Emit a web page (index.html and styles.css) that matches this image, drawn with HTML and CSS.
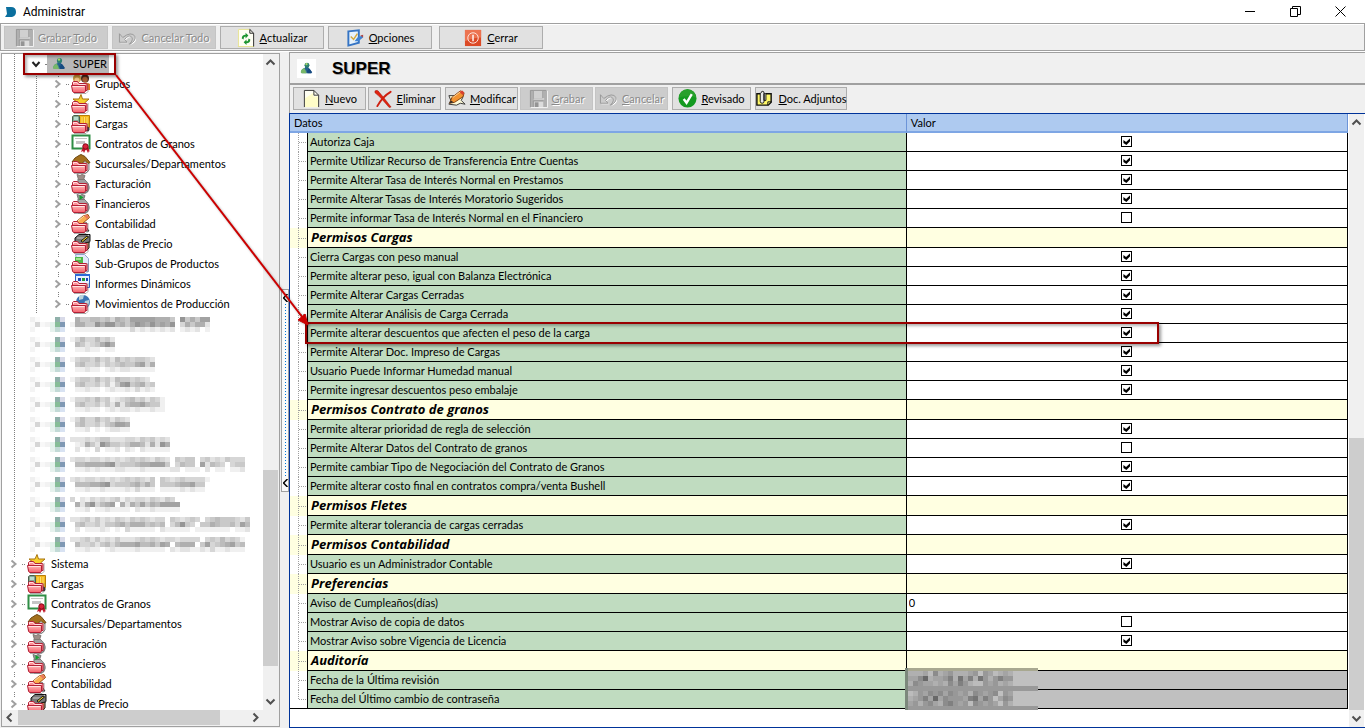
FILE: index.html
```html
<!DOCTYPE html>
<html lang="es">
  <head>
    <meta charset="UTF-8" />
    <meta name="viewport" content="width=device-width, initial-scale=1.0" />
    <title>Administrar</title>
    <link rel="stylesheet" href="styles.css">
  </head>
  <body>
    <svg class="defs" aria-hidden="true">
      <defs>
        <linearGradient id="rojo" x1="0" y1="0" x2="0" y2="1">
          <stop offset="0" stop-color="#ffb8b8" />
          <stop offset="1" stop-color="#f4606c" />
        </linearGradient>
        <linearGradient id="azul" x1="0" y1="0" x2="1" y2="0">
          <stop offset="0" stop-color="#5fae7c" />
          <stop offset="1" stop-color="#2457a0" />
        </linearGradient>
        <g id="carpeta">
          <path d="M3 19.500h12l2-2V9" fill="none" stroke="#777" opacity=".6" />
          <path d="M1.500 17V8.500l1-1h4l1.500 2h7.500l.5 1v6z" fill="#ff9098" stroke="#b32036" />
          <path d="M2.500 10V8.500h3.500l1.500 2h7" fill="none" stroke="#ffdede" />
          <path d="M.5 11.500h14v5.500l-1 1.500h-11l-1-1.500z" fill="url(#rojo)" stroke="#b32036" />
          <path d="M1.500 12.500h12" fill="none" stroke="#ffe2e2" />
        </g>
      </defs>
      <symbol id="i-usuario" viewBox="0 0 20 20">
        <path d="M4 14q0-4 5-5 4 0 6 4v2H5z" fill="url(#azul)" />
        <path d="M4 14q1-4 4-4l2 5H5z" fill="#79b868" />
        <path d="M9 9l4 1 3 4-1 1h-4z" fill="#164a80" />
        <path d="M8.500 7h4l-1 5-3-1z" fill="#24628c" />
        <circle cx="10.500" cy="6.500" r="2.600" fill="#2d8170" />
        <circle cx="10" cy="5.500" r="1.200" fill="#a8d86c" />
      </symbol>
      <symbol id="i-grupos" viewBox="0 0 20 20">
        <circle cx="6" cy="4.500" r="4" fill="#c8973c" />
        <circle cx="6" cy="6" r="2.500" fill="#f0c489" />
        <circle cx="14" cy="4.500" r="4" fill="#4a2b1c" />
        <circle cx="14" cy="5.500" r="2.700" fill="#a85c34" />
        <path d="M11 10q4-3 8 0v6h-5z" fill="#e87820" />
        <use href="#carpeta" />
      </symbol>
      <symbol id="i-sistema" viewBox="0 0 20 20">
        <path d="M10 .5l1.500 4.500h6.500l-4 3.500 1.500 5-5.500-3-5 3 1.500-5-4.500-3.500h6z" fill="#f7cf2c" stroke="#a87510" />
        <use href="#carpeta" />
      </symbol>
      <symbol id="i-cargas" viewBox="0 0 20 20">
        <path d="M7.500 1.500h11v12h-11z" fill="#f5b81c" stroke="#b77c08" />
        <path d="M11 3v10M13.500 3v10M16 3v10" stroke="#fbe070" />
        <path d="M1.500 9V2.500l1.500-1h4l1.500 1V9z" fill="#88a690" stroke="#47604c" />
        <path d="M3 3h4v3H3z" fill="#b8dcd0" />
        <circle cx="16" cy="15" r="2.500" fill="#222" />
        <use href="#carpeta" />
      </symbol>
      <symbol id="i-contratos" viewBox="0 0 20 20">
        <path d="M1.500 1.500h17v13h-17z" fill="#fff" stroke="#2f8d45" stroke-width="2" />
        <path d="M4 4.500h12" stroke="#c5c5c5" />
        <path d="M5 7h9v3H5z" fill="#c5c5c5" />
        <path d="M12 13l-2 5 2-1 1 2 2-4 2 4 1-2 1 1-2-5z" fill="#c0182a" />
        <circle cx="14.500" cy="12.500" r="2.700" fill="#d82238" stroke="#850818" />
      </symbol>
      <symbol id="i-sucursales" viewBox="0 0 20 20">
        <path d="M4 8h14v8l-3 3H6z" fill="#f1f1f1" stroke="#888" />
        <path d="M1 8l3-4L8 1.500l2-1 4 2 5 6-2 1-3-3-3 3z" fill="#a4701c" stroke="#6d4810" />
        <use href="#carpeta" />
      </symbol>
      <symbol id="i-facturacion" viewBox="0 0 20 20">
        <path d="M7 5h6q6 5 5 10-1 4-5 4H7V9z" fill="#a0a0a0" stroke="#777" />
        <path d="M6 .5l3 1 2-1 3 1-1.500 4h-5z" fill="#9d8d87" stroke="#807873" />
        <use href="#carpeta" />
      </symbol>
      <symbol id="i-financieros" viewBox="0 0 20 20">
        <path d="M7 5h6q6 5 5 10-1 4-5 4H7V9z" fill="#a8a8a8" stroke="#777" />
        <path d="M6 .5l3 1 2-1 3 1-1.500 4h-5z" fill="#939c94" stroke="#777" />
        <path d="M8.500 1v5l4-2.500z" fill="#12a030" />
        <use href="#carpeta" />
      </symbol>
      <symbol id="i-contabilidad" viewBox="0 0 20 20">
        <path d="M9 9h7l-1 4 3 4h-6z" fill="#fff" stroke="#222" />
        <path d="M5 8l7-6 5-1.500 1.500 3-7 6-5 1z" fill="#f8ae50" stroke="#9c5010" />
        <path d="M13 1.500l3-1 2 3-2 1.500z" fill="#e8785c" />
        <path d="M7 7l6-5" stroke="#ffe0b0" />
        <use href="#carpeta" />
      </symbol>
      <symbol id="i-tablas" viewBox="0 0 20 20">
        <path d="M4 4l4-3.500h11v7l-4 3.500H4z" fill="#777" stroke="#111" />
        <path d="M6 4h8l4-3" fill="none" stroke="#ccc" />
        <path d="M10 7l6-5 1.500 1-6 5z" fill="#f4d52b" stroke="#111" />
        <path d="M14 9l4-1v6l-3 3z" fill="#d28b4e" stroke="#111" />
        <use href="#carpeta" />
      </symbol>
      <symbol id="i-subgrupos" viewBox="0 0 20 20">
        <path d="M4.500 .5h9l4 4v13h-9z" fill="#e2eafa" stroke="#91a4cc" />
        <path d="M4 3h8v6H4z" fill="#4cb848" />
        <path d="M5 4h5v2H5z" fill="#a2e48c" />
        <use href="#carpeta" />
      </symbol>
      <symbol id="i-informes" viewBox="0 0 20 20">
        <path d="M4.500 .5h14v13h-14z" fill="#e9f0ff" stroke="#2b62c4" />
        <path d="M4 0h15v2H4z" fill="#2b6bd8" />
        <path d="M7 4h3v3H7zM15 4h2v3h-2z" fill="#1c47b8" />
        <path d="M11 4h3v3h-3z" fill="#1f9a3c" />
        <use href="#carpeta" />
      </symbol>
      <symbol id="i-movimientos" viewBox="0 0 20 20">
        <circle cx="12" cy="8" r="7" fill="#3a74b4" />
        <path d="M8 2q3-2 5-1l-1 4-4 1zM14 7l4-1q1 4-2 7l-3-2z" fill="#b9d2dc" />
        <use href="#carpeta" />
      </symbol>
      <symbol id="i-disquete" viewBox="0 0 20 20">
        <path d="M1 1h17l1 1v17H1z" fill="#b0b0b0" />
        <path d="M4 1h11v9H4z" fill="#d0d0d0" />
        <path d="M5 13h10v6H5z" fill="#dcdcdc" />
        <path d="M6 14h4v5H6z" fill="#949494" />
        <path d="M1.500 19V1.500H18M4.500 2v8h10V2M4.500 19v-6.500H15" fill="none" stroke="#989898" />
        <path d="M19.500 2v17.500H2M5 10.500h11" fill="none" stroke="#f2f2f2" />
      </symbol>
      <symbol id="i-deshacer" viewBox="0 0 20 20">
        <path d="M1.500 6v9h8l-2.500-3q4-5 7-3 3 3-2 8 7-3 6-8-4-6-13 1z" fill="#fff" transform="translate(1 1)" />
        <path d="M1.500 6v9h8l-2.500-3q4-5 7-3 3 3-2 8 7-3 6-8-4-6-13 1z" fill="#ccc" stroke="#989898" />
      </symbol>
      <symbol id="i-actualizar" viewBox="0 0 20 20">
        <path d="M1 1h12l5 5v14H1z" fill="#fffff4" />
        <path d="M1.500 19.500V1.500h12M1 19.500h17" fill="none" stroke="#e6e290" />
        <path d="M13.500 1.500v4h4M13.500 1.500l4 4v14" fill="none" stroke="#222" />
        <path d="M5 11q0-4 4-4V5l3 3-3 3V9q-2 0-2 3zM14 12q0 4-4 4v2l-3-3 3-3v2q2 0 2-3z" fill="#1e9630" />
      </symbol>
      <symbol id="i-opciones" viewBox="0 0 20 20">
        <path d="M2.500 3.500l11-1v13l-11 3z" fill="#e6f2fc" stroke="#3574c4" stroke-width="2" />
        <path d="M5 9l3 3 4-6" fill="none" stroke="#d3a83c" stroke-width="1.500" />
        <path d="M9 14l3-4 5-2 1 2-5 4z" fill="#3e82d2" />
        <path d="M15 8l3-1v3z" fill="#b04848" />
      </symbol>
      <symbol id="i-cerrar" viewBox="0 0 20 20">
        <path d="M1 2h17v17H1z" fill="#dc4a26" />
        <path d="M1 2h17v8q-8 0-17 4z" fill="#ec7350" />
        <circle cx="9.500" cy="10.500" r="5.500" fill="none" stroke="#ffe8e0" />
        <path d="M9.500 7v7" stroke="#fff" stroke-width="1.500" />
      </symbol>
      <symbol id="i-nuevo" viewBox="0 0 20 20">
        <path d="M2.500 1.500h10l5 5v13h-15z" fill="#fffff2" />
        <path d="M3 19V10l9-6v4h5v11z" fill="#fffdc8" />
        <path d="M2.500 19V1.500h10l5 5V19M12.500 1.500v5h5" fill="none" stroke="#333" />
      </symbol>
      <symbol id="i-eliminar" viewBox="0 0 20 20">
        <path d="M1 2q3-2 5 2l5 6 7 9-2 .5-7-8Q4 6 1 4z" fill="#e02410" stroke="#a01008" stroke-width=".5" />
        <path d="M17.500 3Q9 8 3.500 18" fill="none" stroke="#cf2010" stroke-width="2" stroke-linecap="round" />
      </symbol>
      <symbol id="i-modificar" viewBox="0 0 20 20">
        <path d="M2 7h9l6 1-2 4 4 4-5-1-4 2-8-1 2-4z" fill="#fffbd8" stroke="#333" />
        <path d="M3 15l2-6 9-7 4 2-1 4-9 6z" fill="#f29332" stroke="#803c0c" />
        <path d="M13 2.500l3-1 2 2-1 3-4-3z" fill="#d84030" />
        <path d="M3 15l1-3 3 2z" fill="#2b2b2b" />
        <path d="M6 9l8-6" stroke="#ffd79c" />
      </symbol>
      <symbol id="i-revisado" viewBox="0 0 20 20">
        <circle cx="10" cy="10" r="9.500" fill="#149a20" />
        <path d="M1 9a9 9 0 0 1 18 0q-9-3-18 0z" fill="#28a02c" />
        <path d="M6 10.500l3 4 5.500-9" fill="none" stroke="#fff" stroke-width="2.500" />
      </symbol>
      <symbol id="i-adjuntos" viewBox="0 0 20 20">
        <path d="M2 5h15v9l-3 3H2z" fill="#fff868" stroke="#111" stroke-width="1.500" />
        <path d="M5.500 4v9q0 2 2 2t2-2V4q0-1.500-1.500-1.500T6.500 4M9.500 5v7h2V5" fill="#e8e8e8" stroke="#111" />
        <path d="M13.500 17v-3.500h4" fill="none" stroke="#111" />
      </symbol>
    </svg>

    <header class="titulo">
      <svg class="logo" viewBox="0 0 11 12" aria-hidden="true">
        <path d="M1 1h5q5 0 5 5 0 4-4 5H0l2-3z" fill="#0a6f9e" />
      </svg>
      <span class="nombre">Administrar</span>
      <button class="ventana" aria-label="Minimizar">
        <svg viewBox="0 0 11 11"><path d="M0 5.500h10" /></svg>
      </button>
      <button class="ventana" aria-label="Restaurar">
        <svg viewBox="0 0 11 11"><path d="M.5 2.500h7v8h-7zM2.500 2.500v-2h8v8h-3" /></svg>
      </button>
      <button class="ventana" aria-label="Cerrar ventana">
        <svg viewBox="0 0 11 11"><path d="M.5 .5l10 10M10.500 .5l-10 10" /></svg>
      </button>
    </header>

    <div class="barra principal">
      <button class="boton" disabled><svg><use href="#i-disquete" /></svg><span>Grabar <u>T</u>odo</span></button>
      <button class="boton" disabled><svg><use href="#i-deshacer" /></svg><span>Cancelar Todo</span></button>
      <button class="boton"><svg><use href="#i-actualizar" /></svg><span><u>A</u>ctualizar</span></button>
      <button class="boton"><svg><use href="#i-opciones" /></svg><span><u>O</u>pciones</span></button>
      <button class="boton aparte"><svg><use href="#i-cerrar" /></svg><span><u>C</u>errar</span></button>
    </div>

    <main>
      <nav class="panel">
        <div class="arbol" id="arbol"></div>
        <div class="scroll vertical izquierda">
          <svg viewBox="0 0 15 17"><path d="M3.500 10.500l4-4 4 4" /></svg>
          <div class="pista"><div class="tirador"></div></div>
          <svg viewBox="0 0 15 17"><path d="M3.500 6.500l4 4 4-4" /></svg>
        </div>
        <div class="scroll horizontal">
          <svg viewBox="0 0 16 15"><path d="M9.500 3.500l-4 4 4 4" /></svg>
          <div class="pista"><div class="tirador"></div></div>
          <svg viewBox="0 0 16 15"><path d="M6.500 3.500l4 4-4 4" /></svg>
        </div>
      </nav>

      <div class="divisor">
        <button class="plegar" aria-label="Plegar panel">
          <svg viewBox="0 0 5 8"><path d="M4.500 0l-4 4 4 4" /></svg>
          <i></i>
          <svg viewBox="0 0 5 8"><path d="M4.500 0l-4 4 4 4" /></svg>
        </button>
      </div>

      <section class="detalle">
        <div class="cabecera">
          <svg class="avatar"><use href="#i-usuario" /></svg>
          <h1>SUPER</h1>
        </div>
        <div class="barra acciones">
          <button class="boton"><svg><use href="#i-nuevo" /></svg><span><u>N</u>uevo</span></button>
          <button class="boton"><svg><use href="#i-eliminar" /></svg><span><u>E</u>liminar</span></button>
          <button class="boton grupo"><svg><use href="#i-modificar" /></svg><span><u>M</u>odificar</span></button>
          <button class="boton" disabled><svg><use href="#i-disquete" /></svg><span><u>G</u>rabar</span></button>
          <button class="boton" disabled><svg><use href="#i-deshacer" /></svg><span><u>C</u>ancelar</span></button>
          <button class="boton grupo medio"><svg><use href="#i-revisado" /></svg><span><u>R</u>evisado</span></button>
          <button class="boton grupo largo"><svg><use href="#i-adjuntos" /></svg><span><u>D</u>oc. Adjuntos</span></button>
        </div>
        <div class="rejilla">
          <div class="tabla">
            <table>
              <colgroup>
                <col class="col-guia">
                <col>
                <col class="col-valor">
              </colgroup>
              <thead>
                <tr><th colspan="2">Datos</th><th>Valor</th></tr>
              </thead>
              <tbody id="datos"></tbody>
            </table>
          </div>
          <div class="scroll vertical derecha">
            <svg viewBox="0 0 15 17"><path d="M3.500 10.500l4-4 4 4" /></svg>
            <div class="pista"><div class="tirador"></div></div>
            <svg viewBox="0 0 15 17"><path d="M3.500 6.500l4 4 4-4" /></svg>
          </div>
        </div>
      </section>
    </main>

    <div class="marca marca-arbol"></div>
    <div class="marca marca-fila"></div>
    <svg class="flecha" viewBox="0 0 200 260" aria-hidden="true">
      <path d="M6 4L193 247" stroke="#c00" stroke-width="2" />
      <path d="M198 254l-10-5 7-6z" fill="#c00" stroke="#c00" />
    </svg>

    <script src="script.js"></script>
  </body>
</html>
```
FILE: styles.css
```css
* {
  box-sizing: border-box;
}
body {
  margin: 0;
  height: 100vh;
  display: flex;
  flex-direction: column;
  overflow: hidden;
  background: #f0f0f0;
  color: #000;
  font: 11px/18px Lato, "Liberation Sans", sans-serif;
}
button,
input {
  font: inherit;
  color: inherit;
}
svg {
  display: block;
  flex: none;
}
.defs {
  position: absolute;
  width: 0;
  height: 0;
}

/* barra de título */
.titulo {
  display: flex;
  align-items: center;
  height: 23px;
  padding: 0 2px 0 5px;
  background: #fff;
}
.logo {
  width: 11px;
  height: 12px;
}
.nombre {
  flex: 1;
  margin-left: 7px;
  font: 12px/18px Roboto, sans-serif;
}
.ventana {
  width: 45px;
  height: 21px;
  padding: 0 17px;
  border: 0;
  background: none;
}
.ventana svg {
  width: 11px;
  height: 11px;
  fill: none;
  stroke: #000;
}

/* botones */
.barra {
  display: flex;
  gap: 4px;
}
.principal {
  height: 28px;
  margin-bottom: 1px;
  padding: 2px 3px;
  border: 1px solid #a0a0a0;
  box-shadow: inset 0 1px #fff, 0 1px #fff;
}
.boton {
  display: flex;
  justify-content: center;
  align-items: center;
  gap: 4px;
  width: 104px;
  height: 23px;
  padding: 0;
  border: 1px solid #adadad;
  background: #e1e1e1;
  white-space: nowrap;
}
.boton svg {
  width: 19px;
  height: 19px;
}
.boton:disabled {
  border-color: #c4c4c4;
  background: #ccc;
  color: #8a8a8a;
  text-shadow: 1px 1px #fff;
}
.aparte {
  margin-left: 3px;
}
.acciones {
  gap: 2px;
  padding: 2px 4px 3px 3px;
}
.acciones .boton {
  width: 73px;
}
.acciones .grupo {
  margin-left: 2px;
}
.acciones .medio {
  width: 79px;
}
.acciones .largo {
  width: 92px;
}

main {
  flex: 1;
  display: flex;
  min-height: 0;
}

/* panel del árbol */
.panel {
  flex: none;
  display: grid;
  grid-template: 1fr 16px / 1fr 16px;
  width: 279px;
  margin: 1px 0 1px 1px;
  border: 1px solid #a0a0a0;
  background: #f0f0f0;
}
.arbol {
  padding-left: 1px;
  overflow: hidden;
  background: #fff;
}
.nodo {
  display: flex;
  height: 20px;
  line-height: 20px;
  white-space: nowrap;
}
.guia,
.rama {
  flex: none;
  width: 22px;
  background: repeating-linear-gradient(#808080 0 1px, transparent 1px 2px) 11px 0 / 1px 100% no-repeat;
}
.rama {
  display: flex;
  align-items: center;
  padding-left: 7px;
}
.rama svg {
  width: 8px;
  height: 14px;
  background: #fff;
  fill: none;
  stroke: #a0a0a0;
  stroke-width: 2;
}
.rama::after {
  content: "";
  width: 5px;
  margin-left: 4px;
  border-top: 1px dotted #808080;
}
.rama.fin {
  background-size: 1px 50%;
}
.rama.abierta {
  padding-left: 6px;
  background: none;
}
.rama.abierta svg {
  width: 10px;
  stroke: #222;
}
.nodo a {
  display: flex;
  gap: 4px;
  padding: 0 2px;
  color: #000;
  text-decoration: none;
}
.nodo a svg {
  width: 20px;
  height: 20px;
}
.nodo.activo a {
  background: #b8b8b8;
}
.oculto {
  width: 235px;
  height: 15px;
  margin-top: 3px;
}

/* barras de desplazamiento */
.scroll {
  display: flex;
  background: #f0f0f0;
}
.scroll svg {
  fill: none;
  stroke: #505050;
  stroke-width: 2;
}
.vertical {
  flex-direction: column;
}
.vertical svg {
  width: 15px;
  height: 17px;
}
.horizontal svg {
  width: 16px;
  height: 15px;
}
.pista {
  flex: 1;
}
.tirador {
  background: #cdcdcd;
}
.vertical .pista {
  display: flex;
  flex-direction: column;
  justify-content: flex-end;
}
.vertical .tirador {
  width: 15px;
}
.izquierda .pista {
  padding-bottom: 27px;
}
.izquierda .tirador {
  height: 33%;
}
.derecha {
  margin: 0 1px;
}
.derecha .tirador {
  height: 47%;
}
.horizontal .tirador {
  width: 88%;
  height: 15px;
}

/* divisor */
.divisor {
  flex: none;
  display: flex;
  align-items: center;
  width: 9px;
  padding-left: 1px;
}
.plegar {
  display: flex;
  flex-direction: column;
  align-items: center;
  width: 8px;
  height: 203px;
  padding: 4px 0;
  border: 1px solid #a0a0a0;
  background: #fafafa;
}
.plegar svg {
  width: 5px;
  height: 8px;
  fill: none;
  stroke: #000;
  stroke-width: 1.5;
}
.plegar i {
  flex: 1;
  width: 2px;
  margin: 2px 0;
  background: repeating-linear-gradient(#0078d7 0 1px, transparent 1px 3px) 1px 0 / 1px 100% no-repeat;
}

/* detalle */
.detalle {
  flex: 1;
  display: flex;
  flex-direction: column;
  min-width: 0;
}
.cabecera {
  display: flex;
  align-items: center;
  height: 33px;
  padding-left: 7px;
  border: 1px solid #a0a0a0;
  border-bottom-width: 2px;
  border-right: 0;
}
.avatar {
  width: 19px;
  height: 19px;
  background: #fff;
}
h1 {
  margin: 2px 0 0 16px;
  font: bold 17px/20px "Liberation Sans", Arial, sans-serif;
  text-shadow: 1px 1px #a8a8a8;
}
.acciones {
  border-left: 1px solid #a0a0a0;
}
.rejilla {
  flex: 1;
  display: flex;
  min-height: 0;
  border: 1px solid #003399;
  border-right: 0;
  background: #fff;
}
.tabla {
  flex: 1;
  overflow: hidden;
}
table {
  width: 100%;
  table-layout: fixed;
  border-spacing: 0;
}
.col-guia {
  width: 18px;
}
.col-valor {
  width: 41.7%;
}
th,
td {
  padding: 0;
  text-align: left;
  font-weight: normal;
}
th {
  height: 19px;
  padding-left: 4px;
  border-right: 1px solid #6c94d8;
  border-bottom: 2px solid #7ea6e4;
  background: #aecaf0;
  line-height: 17px;
}
td {
  height: 19px;
  border-right: 1px solid #000;
  border-bottom: 1px solid #000;
}
td:first-child {
  border-bottom: 0;
  background:
    repeating-linear-gradient(#a0a0a0 0 1px, transparent 1px 2px) 8px 0 / 1px 100% no-repeat,
    repeating-linear-gradient(90deg, #a0a0a0 0 1px, transparent 1px 2px) 9px 50% / 8px 1px no-repeat;
}
tr:last-child td:first-child {
  border-bottom: 1px solid #000;
  background-size: 1px 50%, 8px 1px;
}
.campo {
  padding-left: 2px;
  background: #c0dcc0;
}
.campo label {
  display: block;
}
.valor input {
  display: block;
}
.valor input[type="checkbox"] {
  appearance: none;
  width: 11px;
  height: 11px;
  margin: 0 auto 1px;
  border: 1px solid #000;
  background: #fff;
}
.valor input:checked::before {
  content: "";
  display: block;
  width: 7px;
  height: 7px;
  margin: 1px;
  background: #000;
  clip-path: polygon(0 28%, 38% 57%, 100% 0, 100% 43%, 43% 100%, 0 72%);
}
.valor input[type="text"] {
  width: 100%;
  height: 18px;
  padding: 0 2px;
  border: 0;
  background: none;
}
.categoria td {
  height: 20px;
  padding-left: 3px;
  background-color: #ffffe1;
  font: italic bold 13px/19px "Open Sans", sans-serif;
}
.bloqueado {
  background: #c0c0c0;
}
.primero {
  position: relative;
}
.tapado {
  position: absolute;
  z-index: 1;
  left: -2px;
  top: -3px;
  width: 133px;
  height: 42px;
}

/* marcas sobre la ventana */
.marca {
  position: absolute;
  border: 2px solid #900;
  box-shadow: 2px 2px 3px rgba(0, 0, 0, 0.4), inset 2px 2px 3px rgba(0, 0, 0, 0.3);
  pointer-events: none;
}
.marca-arbol {
  left: 23px;
  top: 53px;
  width: 93px;
  height: 22px;
}
.marca-fila {
  left: 305px;
  right: 206px;
  top: 322px;
  height: 22px;
}
.flecha {
  position: absolute;
  left: 110px;
  top: 71px;
  width: 200px;
  height: 260px;
  filter: drop-shadow(1px 1px 1px rgba(0, 0, 0, 0.3));
  pointer-events: none;
}
```
FILE: script.js
```js
const grupos = [
  ["sistema", "Sistema"],
  ["cargas", "Cargas"],
  ["contratos", "Contratos de Granos"],
  ["sucursales", "Sucursales/Departamentos"],
  ["facturacion", "Facturación"],
  ["financieros", "Financieros"],
  ["contabilidad", "Contabilidad"],
  ["tablas", "Tablas de Precio"],
]
const hijos = [
  ["grupos", "Grupos"],
  ...grupos,
  ["subgrupos", "Sub-Grupos de Productos"],
  ["informes", "Informes Dinámicos"],
  ["movimientos", "Movimientos de Producción"],
]

// nombres tapados: tres filas de cuadros, 0 = blanco y 9 = oscuro
const tapados = [
  ["0644554536547777766640846477", "1664486885646876867680364662", "0111111111113121212120121201"],
  ["135335342", "054234686", "011211011"],
  ["13443534253434432", "04533424345446736", "01121101212211111"],
  ["1344353425443432", "04533424147845634", "01121101211213121"],
  ["1334353412345342431", "0453342426256675441", "0112110121221211211"],
  ["135335342432", "045334245776", "011201012211"],
  ["22232344222332434232", "01264286443466526286", "02010301120210211111"],
  ["23323323232343432432043440342324333", "05566667834445667774035440725430344", "01121211122111211111220111020110112"],
  ["2323323232343432404323433331", "0555667834445646404445667440", "0112112111121311101111212110"],
  ["3021323234132332432430", "0626835670626474657777", "0112011211110211211111"],
  ["223424232432434323304323430345444324", "045334244564666454503584304465445375", "020111210103111110211111011111110112"],
  ["22342423242223434323323333034353431", "05334245356667556476056660473456745", "01121101211112111110212211213112111"],
]

const chevron = `<svg viewBox="0 0 8 14"><path d="M1.500 3.500l4 3.500-4 3.500" /></svg>`
const chevronAbierto = `<svg viewBox="0 0 10 14"><path d="M1.500 5l3.500 4 3.500-4" /></svg>`

function cuadro(x, y, color) {
  return `<rect x="${x}" y="${y}" width="5" height="5" fill="${color}" />`
}

function mosaico(filas, inicio, base, paso) {
  return filas
    .map((fila, j) =>
      [...fila]
        .map((n, i) => {
          const g = base - n * paso
          return n === "0" ? "" : cuadro(inicio + i * 5, j * 5, `rgb(${g},${g},${g})`)
        })
        .join("")
    )
    .join("")
}

const iconoTapado = [
  [5, 0, "#f0f0f0"], [10, 0, "#fbfbfb"], [30, 0, "#8fb0aa"], [35, 0, "#d8dae8"],
  [5, 5, "#fafafa"], [10, 5, "#d6d6d6"], [15, 5, "#f8f8f8"], [20, 5, "#f2f2f2"],
  [25, 5, "#e3f2ec"], [30, 5, "#86bd98"], [35, 5, "#7e98b4"],
  [5, 10, "#f4f4f4"], [25, 10, "#e6f2ee"], [30, 10, "#c2dad6"], [35, 10, "#d8e2f2"],
]
  .map((c) => cuadro(...c))
  .join("")

function nodo(icono, texto, guias, clase = "", activo = false) {
  return `
    <div class="nodo ${activo ? "activo" : ""}">
      ${`<span class="guia"></span>`.repeat(guias)}
      <span class="rama ${clase}">${activo ? chevronAbierto : chevron}</span>
      <a href="#${icono}"><svg><use href="#i-${icono}" /></svg>${texto}</a>
    </div>`
}

document.getElementById("arbol").innerHTML =
  nodo("usuario", "SUPER", 1, "abierta", true) +
  hijos.map(([i, t], n) => nodo(i, t, 2, n === hijos.length - 1 ? "fin" : "")).join("") +
  tapados
    .map(
      (filas) => `
    <div class="nodo">
      <span class="guia"></span>
      <svg class="oculto" viewBox="0 0 235 15" shape-rendering="crispEdges">${iconoTapado}${mosaico(filas, 45, 253, 13)}</svg>
    </div>`
    )
    .join("") +
  grupos.map(([i, t]) => nodo(i, t, 0)).join("")

// [texto, valor]: sin valor es una categoría
const datos = [
  ["Autoriza Caja", true],
  ["Permite Utilizar Recurso de Transferencia Entre Cuentas", true],
  ["Permite Alterar Tasa de Interés Normal en Prestamos", true],
  ["Permite Alterar Tasas de Interés Moratorio Sugeridos", true],
  ["Permite informar Tasa de Interés Normal en el Financiero", false],
  ["Permisos Cargas"],
  ["Cierra Cargas con peso manual", true],
  ["Permite alterar peso, igual con Balanza Electrónica", true],
  ["Permite Alterar Cargas Cerradas", true],
  ["Permite Alterar Análisis de Carga Cerrada", true],
  ["Permite alterar descuentos que afecten el peso de la carga", true],
  ["Permite Alterar Doc. Impreso de Cargas", true],
  ["Usuario Puede Informar Humedad manual", true],
  ["Permite ingresar descuentos peso embalaje", true],
  ["Permisos Contrato de granos"],
  ["Permite alterar prioridad de regla de selección", true],
  ["Permite Alterar Datos del Contrato de granos", false],
  ["Permite cambiar Tipo de Negociación del Contrato de Granos", true],
  ["Permite alterar costo final en contratos compra/venta Bushell", true],
  ["Permisos Fletes"],
  ["Permite alterar tolerancia de cargas cerradas", true],
  ["Permisos Contabilidad"],
  ["Usuario es un Administrador Contable", true],
  ["Preferencias"],
  ["Aviso de Cumpleaños(días)", "0"],
  ["Mostrar Aviso de copia de datos", false],
  ["Mostrar Aviso sobre Vigencia de Licencia", true],
  ["Auditoría"],
  ["Fecha de la Última revisión", "tapado"],
  ["Fecha del Último cambio de contraseña", "oculto"],
]

const fechas = `
  <svg class="tapado" viewBox="0 0 133 42" shape-rendering="crispEdges">
    <path d="M0 0h133v3H0z" fill="#a8a890" />
    <path d="M3 3h130v39H3z" fill="#c0c0c0" />
    <g transform="translate(3 3)">${mosaico(["222315234222340431232", "335823346273627424644", "254332325364211434232"], 0, 200, 12)}</g>
    <path d="M0 18h133v5H0zM0 38h133v4H0z" fill="#999" />
    <g transform="translate(3 23)">${mosaico(["124354535434254345043", "234638354443673640354", "342453256434154343042"], 0, 200, 12)}</g>
    <path d="M0 0h3v42H0z" fill="#7c887c" />
  </svg>`

function valor(v, id) {
  if (v === "tapado") return fechas
  if (v === "oculto") return ""
  if (typeof v === "string") return `<input type="text" id="${id}" value="${v}" />`
  return `<input type="checkbox" id="${id}" ${v ? "checked" : ""} />`
}

document.getElementById("datos").innerHTML = datos
  .map(([texto, v], n) => {
    if (v === undefined) return `<tr class="categoria"><td></td><td>${texto}</td><td></td></tr>`
    const bloqueado = v === "tapado" || v === "oculto"
    const nombre = bloqueado ? texto : `<label for="dato${n}">${texto}</label>`
    const clase = v === "tapado" ? "bloqueado primero" : bloqueado ? "bloqueado" : ""
    return `<tr><td></td><td class="campo">${nombre}</td><td class="valor ${clase}">${valor(v, "dato" + n)}</td></tr>`
  })
  .join("")
```
